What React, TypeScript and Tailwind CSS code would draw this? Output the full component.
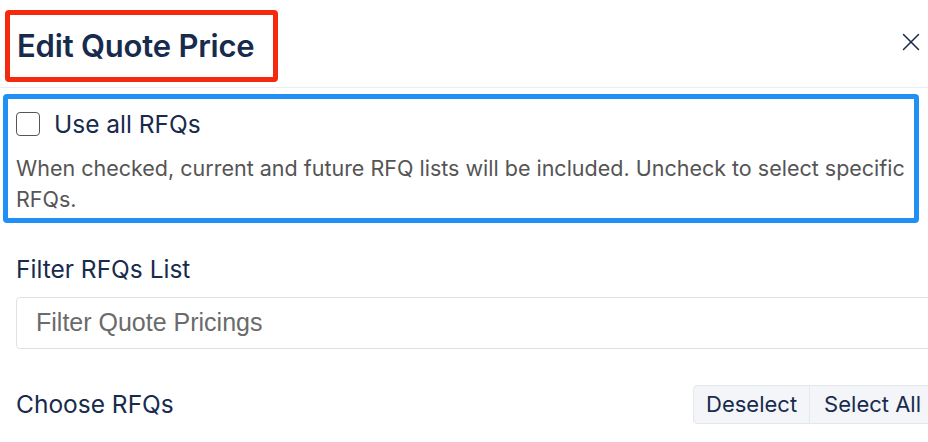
import { X } from 'lucide-react';

export default function App() {
  return (
    <div className="w-[928px] h-[442px] overflow-hidden bg-white text-[#172b4d] font-['Inter','Noto_Sans',sans-serif]">
      {/* header */}
      <div className="h-[88px] border-b border-[#ebecf0] flex items-start justify-between">
        <div className="mt-[10px] ml-[5px] h-[72px] border-[5px] border-[#f5290f] rounded-[4px] pl-[7px] pr-[18px] flex items-center">
          <h1 className="text-[31px] font-semibold tracking-[-0.2px]">Edit Quote Price</h1>
        </div>
        <button className="mt-[27px] mr-[2px] text-[#172b4d]">
          <X size={30} strokeWidth={1.2} />
        </button>
      </div>

      {/* use all rfqs */}
      <div className="mt-[6px] ml-[3px] w-[916px] h-[129px] border-[5px] border-[#2190f5] rounded-[4px] pl-[8px] pt-[12px]">
        <label className="flex items-center gap-[14px]">
          <span className="w-[24px] h-[24px] rounded-[4px] border-[1.5px] border-[#555] bg-white" />
          <span className="text-[24.5px] leading-[26px]">Use all RFQs</span>
        </label>
        <p className="mt-[16px] text-[21.5px] leading-[31px] text-[#555555]">
          When checked, current and future RFQ lists will be included. Uncheck to select specific RFQs.
        </p>
      </div>

      {/* filter + choose */}
      <div className="w-[960px] pl-[16px]">
        <div className="mt-[31px] text-[24.5px] leading-[30px]">Filter RFQs List</div>
        <div className="mt-[13px] h-[52px] border border-[#dfe1e6] rounded-[4px] flex items-center pl-[19px]">
          <span className="text-[25px] text-[#6b6b6b] font-['Liberation_Sans',sans-serif]">Filter Quote Pricings</span>
        </div>
        <div className="mt-[36px] w-[920px] flex items-center justify-between">
          <div className="text-[24.5px]">Choose RFQs</div>
          <div className="flex h-[39px] border border-[#e4e7ec] rounded-[4px] bg-[#f4f5f8] overflow-hidden">
            <button className="px-[12px] text-[22px] text-[#172b4d] border-r border-[#e4e7ec]">Deselect</button>
            <button className="px-[14px] text-[22px] text-[#172b4d]">Select All</button>
          </div>
        </div>
      </div>
    </div>
  );
}
